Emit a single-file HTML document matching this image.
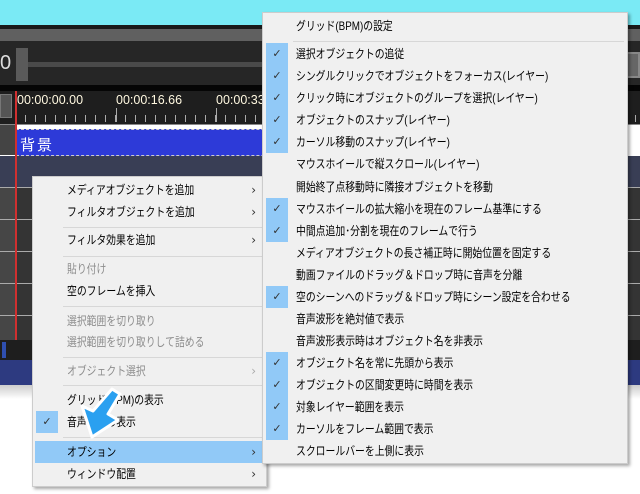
<!DOCTYPE html>
<html><head><meta charset="utf-8"><style>
*{margin:0;padding:0;box-sizing:border-box}
body{width:640px;height:494px;overflow:hidden;position:relative;background:#fff;font-family:"Liberation Sans","Noto Sans CJK JP",sans-serif;font-size:12px;color:#000}
.a{position:absolute}
.menu{position:absolute;background:#f0f0f0;border:1px solid #ccc;box-shadow:2px 2px 3px rgba(0,0,0,.35)}
.it{position:absolute;left:0;right:0;height:22px;line-height:22px;white-space:nowrap}
.t{display:inline-block;transform:scaleX(.82);transform-origin:0 50%}
.g{color:#8d8d8d}
.sep{position:absolute;height:1px;background:#d7d7d7}
.ck{position:absolute;width:22px;height:22px;line-height:22px;background:#91c9f7;text-align:center;color:#333;font-size:11px;font-family:"DejaVu Sans",sans-serif}
.ar{position:absolute;right:10px;top:0;color:#333;font-family:"DejaVu Sans",sans-serif;font-size:12px}
</style></head><body>
<div class="a" style="left:0;top:0;width:640px;height:25px;background:#7aeaf5"></div>
<div class="a" style="left:0;top:25px;width:640px;height:4px;background:#1a1a1a"></div>
<div class="a" style="left:0;top:29px;width:640px;height:12px;background:#606060"></div>
<div class="a" style="left:0;top:41px;width:640px;height:44px;background:#262626"></div>
<div class="a" style="left:0;top:52px;color:#ddd;font-size:20px">0</div>
<div class="a" style="left:16px;top:48px;width:12px;height:33px;background:#5a5a5a"></div>
<div class="a" style="left:28px;top:62px;width:240px;height:5px;background:#4a4a4a"></div>
<div class="a" style="left:625px;top:52px;width:15px;height:26px;background:#666;border:2px solid #888"></div>
<div class="a" style="left:0;top:85px;width:640px;height:6px;background:#050505"></div>
<div class="a" style="left:0;top:91px;width:640px;height:33px;background:#1e1e1e"></div>
<div class="a" style="left:0;top:94px;width:12px;height:24px;background:#555;border:1px solid #777"></div>
<div class="a" style="left:17px;top:93px;color:#fff8e0;font-size:12.5px">00:00:00.00</div>
<div class="a" style="left:116px;top:93px;color:#fff8e0;font-size:12.5px">00:00:16.66</div>
<div class="a" style="left:216px;top:93px;color:#fff8e0;font-size:12.5px">00:00:33</div>
<div class="a" style="left:16px;top:115px;width:620px;height:7px;background:repeating-linear-gradient(90deg,transparent 0 9px,#aaa 9px 10px)"></div>
<div class="a" style="left:116px;top:108px;width:1px;height:14px;background:#aaa"></div>
<div class="a" style="left:216px;top:108px;width:1px;height:14px;background:#aaa"></div>
<div class="a" style="left:0;top:124px;width:640px;height:1px;background:#888"></div>
<div class="a" style="left:0;top:125px;width:16px;height:30px;background:#444"></div>
<div class="a" style="left:16px;top:129px;width:609px;height:27px;background:#2d3ad8;border:1px dashed #ccc"></div>
<div class="a" style="left:20px;top:134px;color:#fff;font-size:15px;letter-spacing:2px">背景</div>
<div class="a" style="left:0;top:156px;width:640px;height:31px;background:#393e55"></div>
<div class="a" style="left:0;top:187px;width:640px;height:153px;background:repeating-linear-gradient(180deg,#aaa 0 1px,#343434 1px 32px)"></div>
<div class="a" style="left:0;top:187px;width:16px;height:153px;background:repeating-linear-gradient(180deg,#aaa 0 1px,#464646 1px 32px)"></div>
<div class="a" style="left:15px;top:91px;width:2px;height:249px;background:#d03030"></div>
<div class="a" style="left:0;top:340px;width:640px;height:20px;background:#1e1e1e"></div>
<div class="a" style="left:2px;top:342px;width:4px;height:16px;background:#2f4fb0"></div>
<div class="a" style="left:0;top:360px;width:640px;height:25px;background:#2d3a80"></div>
<div class="a" style="left:0;top:385px;width:640px;height:14px;background:linear-gradient(#ccc,#fff)"></div>

<div class="menu" style="left:32px;top:176px;width:235px;height:311px">
<div class="it" style="top:2px;padding-left:34px"><span class="t">メディアオブジェクトを追加</span><span class="ar">›</span></div>
<div class="it" style="top:24px;padding-left:34px"><span class="t">フィルタオブジェクトを追加</span><span class="ar">›</span></div>
<div class="sep" style="left:30px;right:3px;top:50px"></div>
<div class="it" style="top:52px;padding-left:34px"><span class="t">フィルタ効果を追加</span><span class="ar">›</span></div>
<div class="sep" style="left:30px;right:3px;top:79px"></div>
<div class="it g" style="top:81px;padding-left:34px"><span class="t">貼り付け</span></div>
<div class="it" style="top:103px;padding-left:34px"><span class="t">空のフレームを挿入</span></div>
<div class="sep" style="left:30px;right:3px;top:129px"></div>
<div class="it g" style="top:133px;padding-left:34px"><span class="t">選択範囲を切り取り</span></div>
<div class="it g" style="top:154px;padding-left:34px"><span class="t">選択範囲を切り取りして詰める</span></div>
<div class="sep" style="left:30px;right:3px;top:180px"></div>
<div class="it g" style="top:183px;padding-left:34px"><span class="t">オブジェクト選択</span><span class="ar" style="color:#aaa">›</span></div>
<div class="sep" style="left:30px;right:3px;top:208px"></div>
<div class="it" style="top:212px;padding-left:34px"><span class="t">グリッド(BPM)の表示</span></div>
<div class="ck" style="left:3px;top:234px">✓</div>
<div class="it" style="top:234px;padding-left:34px"><span class="t">音声波形の表示</span></div>
<div class="sep" style="left:30px;right:3px;top:260px"></div>
<div class="it" style="top:264px;left:2px;right:2px;background:#91c9f7;padding-left:32px"><span class="t">オプション</span><span class="ar" style="right:8px">›</span></div>
<div class="it" style="top:286px;padding-left:34px"><span class="t">ウィンドウ配置</span><span class="ar">›</span></div>
</div>

<div class="menu" style="left:262px;top:12px;width:366px;height:452px">
<div class="it" style="top:2px;padding-left:33px"><span class="t">グリッド(BPM)の設定</span></div>
<div class="sep" style="left:30px;right:3px;top:28px"></div>
<div class="ck" style="left:3px;top:30px">✓</div><div class="it" style="top:30px;padding-left:33px"><span class="t">選択オブジェクトの追従</span></div>
<div class="ck" style="left:3px;top:52px">✓</div><div class="it" style="top:52px;padding-left:33px"><span class="t">シングルクリックでオブジェクトをフォーカス(レイヤー)</span></div>
<div class="ck" style="left:3px;top:74px">✓</div><div class="it" style="top:74px;padding-left:33px"><span class="t">クリック時にオブジェクトのグループを選択(レイヤー)</span></div>
<div class="ck" style="left:3px;top:96px">✓</div><div class="it" style="top:96px;padding-left:33px"><span class="t">オブジェクトのスナップ(レイヤー)</span></div>
<div class="ck" style="left:3px;top:118px">✓</div><div class="it" style="top:118px;padding-left:33px"><span class="t">カーソル移動のスナップ(レイヤー)</span></div>
<div class="it" style="top:140px;padding-left:33px"><span class="t">マウスホイールで縦スクロール(レイヤー)</span></div>
<div class="it" style="top:163px;padding-left:33px"><span class="t">開始終了点移動時に隣接オブジェクトを移動</span></div>
<div class="ck" style="left:3px;top:185px">✓</div><div class="it" style="top:185px;padding-left:33px"><span class="t">マウスホイールの拡大縮小を現在のフレーム基準にする</span></div>
<div class="ck" style="left:3px;top:207px">✓</div><div class="it" style="top:207px;padding-left:33px"><span class="t">中間点追加･分割を現在のフレームで行う</span></div>
<div class="it" style="top:229px;padding-left:33px"><span class="t">メディアオブジェクトの長さ補正時に開始位置を固定する</span></div>
<div class="it" style="top:251px;padding-left:33px"><span class="t">動画ファイルのドラッグ＆ドロップ時に音声を分離</span></div>
<div class="ck" style="left:3px;top:273px">✓</div><div class="it" style="top:273px;padding-left:33px"><span class="t">空のシーンへのドラッグ＆ドロップ時にシーン設定を合わせる</span></div>
<div class="it" style="top:295px;padding-left:33px"><span class="t">音声波形を絶対値で表示</span></div>
<div class="it" style="top:317px;padding-left:33px"><span class="t">音声波形表示時はオブジェクト名を非表示</span></div>
<div class="ck" style="left:3px;top:339px">✓</div><div class="it" style="top:339px;padding-left:33px"><span class="t">オブジェクト名を常に先頭から表示</span></div>
<div class="ck" style="left:3px;top:361px">✓</div><div class="it" style="top:361px;padding-left:33px"><span class="t">オブジェクトの区間変更時に時間を表示</span></div>
<div class="ck" style="left:3px;top:383px">✓</div><div class="it" style="top:383px;padding-left:33px"><span class="t">対象レイヤー範囲を表示</span></div>
<div class="ck" style="left:3px;top:405px">✓</div><div class="it" style="top:405px;padding-left:33px"><span class="t">カーソルをフレーム範囲で表示</span></div>
<div class="it" style="top:427px;padding-left:33px"><span class="t">スクロールバーを上側に表示</span></div>
</div>

<svg class="a" style="left:0;top:0" width="640" height="494">
<path d="M112 389 L120 394 L108 414 L118 420 L92 437 L82 406 L93 411 Z" fill="#2aa0f0" stroke="#fff" stroke-width="3" stroke-linejoin="round"/>
</svg>
</body></html>
